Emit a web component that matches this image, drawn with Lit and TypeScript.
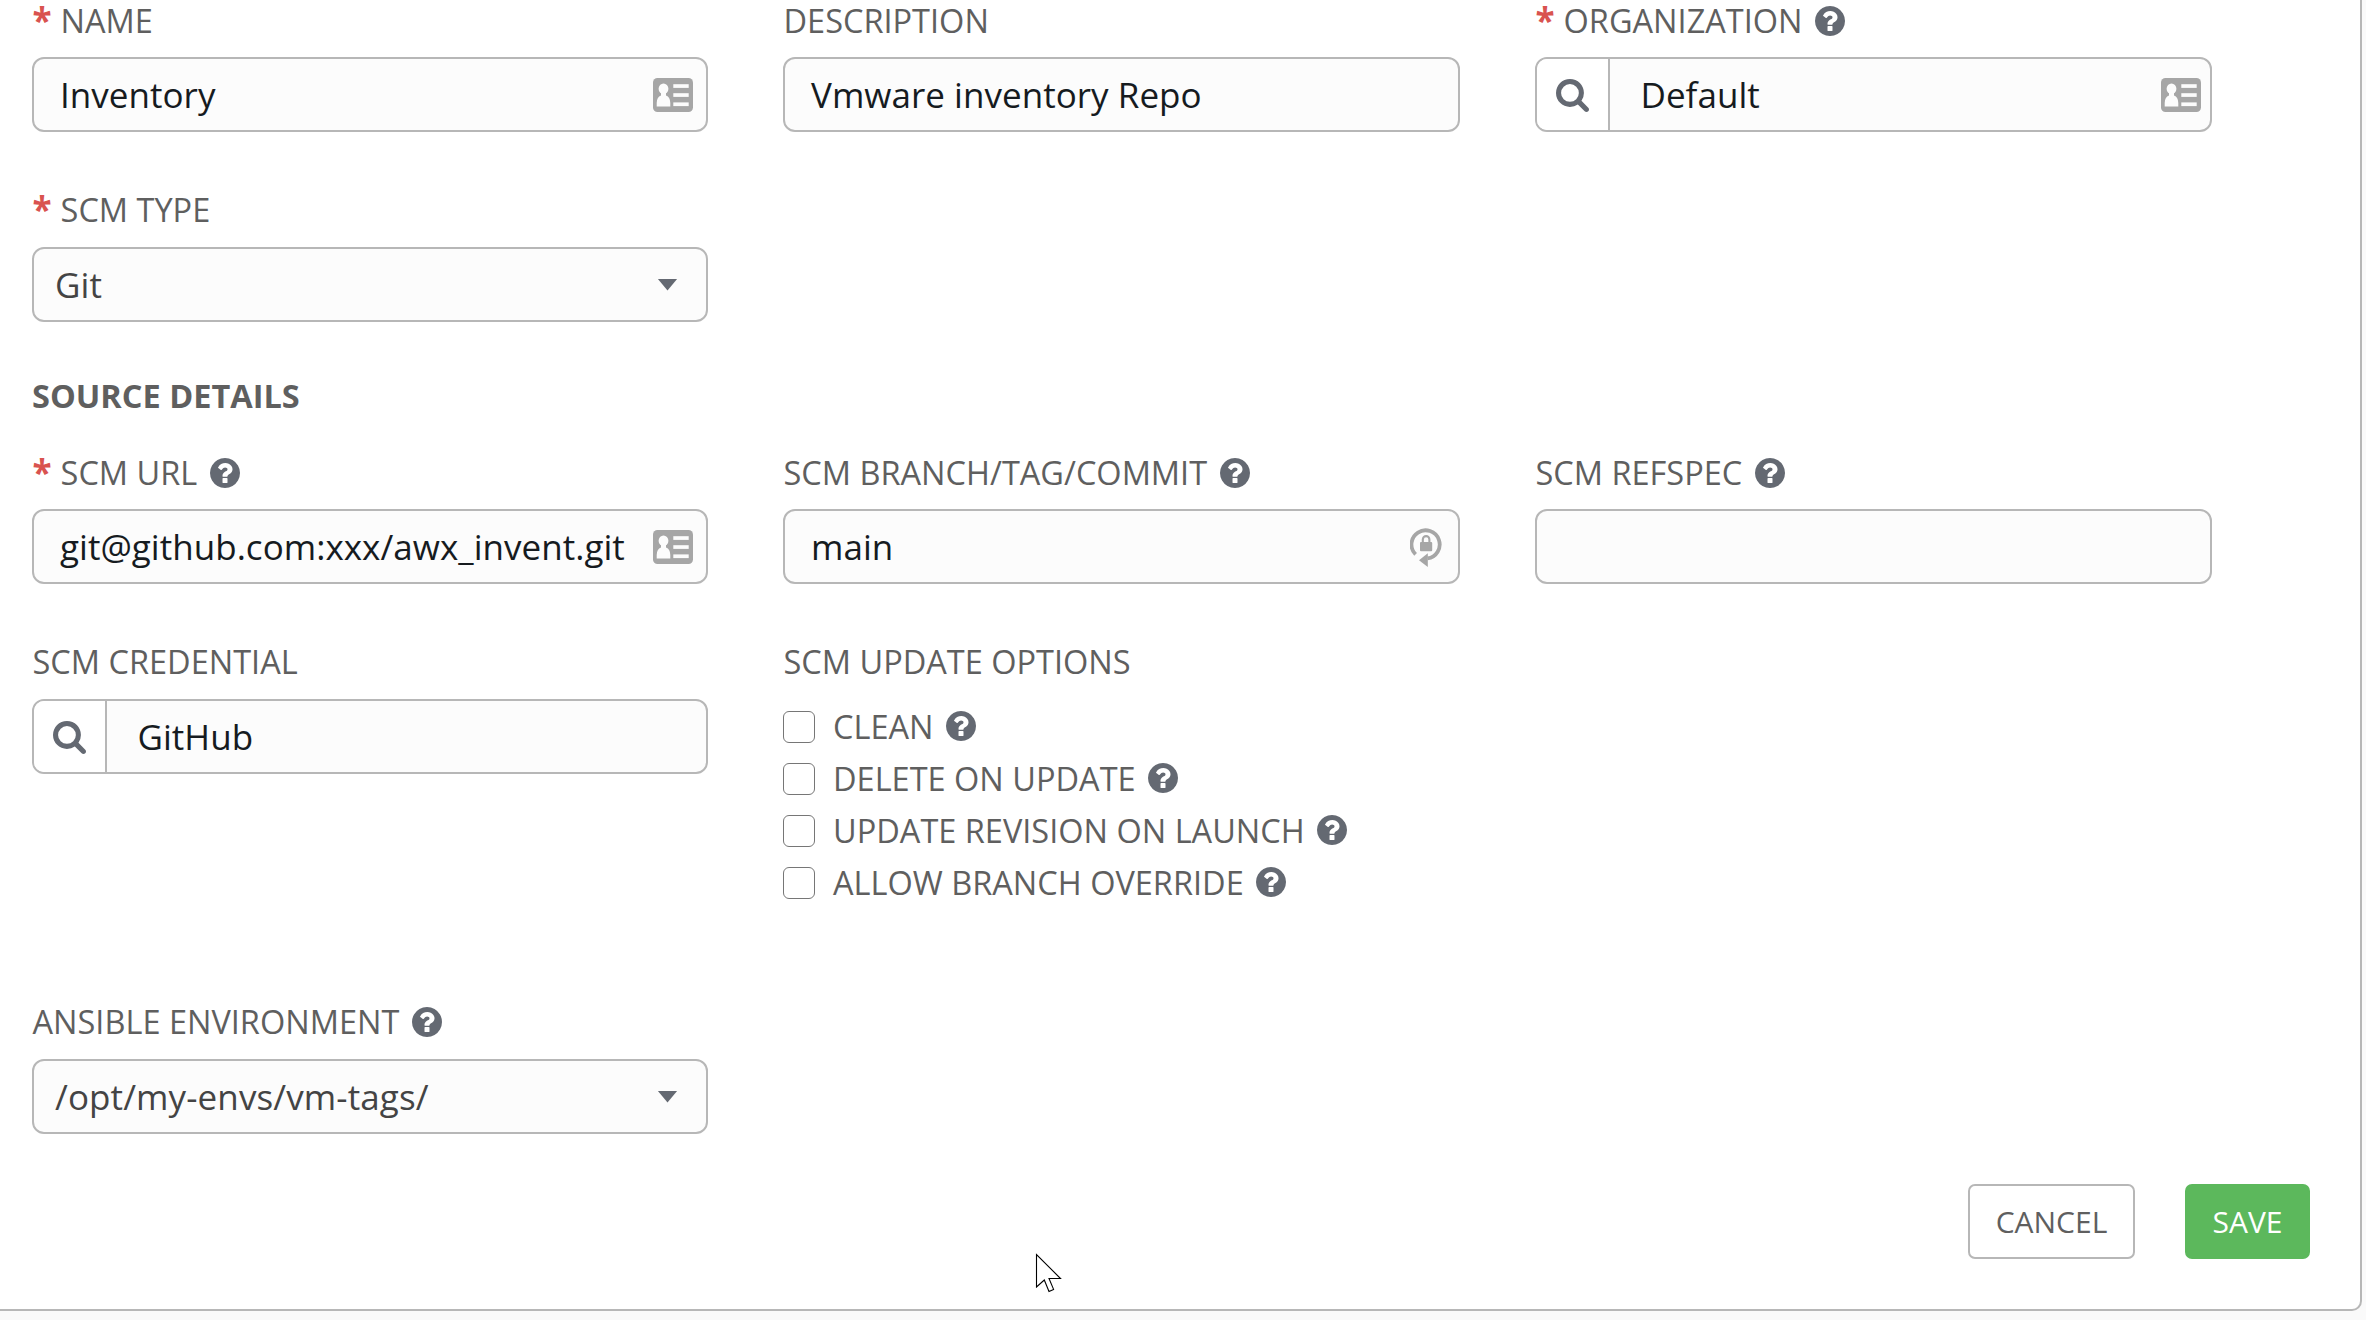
import { LitElement, html, css, svg, nothing } from "lit";
import { customElement, property } from "lit/decorators.js";

const FONT = css`"Open Sans", "Noto Sans", sans-serif`;

const helpIcon = html`<svg class="help" viewBox="128 128 1536 1536" aria-hidden="true">
  <path
    d="M1024 1376v-192q0-14-9-23t-23-9h-192q-14 0-23 9t-9 23v192q0 14 9 23t23 9h192q14 0 23-9t9-23zm256-672q0-88-55.5-163t-138.5-116-170-41q-243 0-371 213-15 24 8 42l132 100q7 6 19 6 16 0 25-12 53-68 86-92 34-24 86-24 48 0 85.5 26t37.5 59q0 38-20 61t-68 45q-63 28-115.5 86.5t-52.5 125.5v36q0 14 9 23t23 9h192q14 0 23-9t9-23q0-19 21.5-49.5t54.5-49.5q32-18 49-28.5t46-35 44.5-48 28-60.5 12.5-81zm384 192q0 209-103 385.5t-279.5 279.5-385.5 103-385.5-103-279.5-279.5-103-385.5 103-385.5 279.5-279.5 385.5-103 385.5 103 279.5 279.5 103 385.5z"
  ></path>
</svg>`;

const searchIcon = html`<svg class="search" viewBox="64 128 1664 1664" aria-hidden="true">
  <path
    d="M1216 832q0-185-131.5-316.5t-316.5-131.5-316.5 131.5-131.5 316.5 131.5 316.5 316.5 131.5 316.5-131.5 131.5-316.5zm512 832q0 52-38 90t-90 38q-54 0-90-38l-343-342q-179 124-399 124-143 0-273.5-55.5t-225-150-150-225-55.5-273.5 55.5-273.5 150-225 225-150 273.5-55.5 273.5 55.5 225 150 150 225 55.5 273.5q0 220-124 399l343 343q37 37 37 90z"
  ></path>
</svg>`;

const cardIcon = html`<svg class="card" viewBox="0 0 40 34" aria-hidden="true">
  <rect width="40" height="34" rx="4.5" fill="#a6a6a6"></rect>
  <g fill="#fcfcfc">
    <ellipse cx="10.5" cy="10.8" rx="4.9" ry="5.3"></ellipse>
    <path d="M8 14h5v3.4q4.3 1.6 4.3 7.6v3.4H3.7V25q0-6 4.3-7.6z"></path>
    ${[6.2, 15.2, 24.4].map((y) => svg`<rect x="20.3" y=${y} width="15.4" height="3.7"></rect>`)}
  </g>
</svg>`;

const lockIcon = html`<svg class="lock" viewBox="0 0 33 41" aria-hidden="true">
  <path d="M5.6 28.4A14.1 14.1 0 1 1 17.5 32.4" fill="none" stroke="#a6a6a6" stroke-width="3.8"></path>
  <path d="M9 34.2L17.8 27.2V41z" fill="#a6a6a6"></path>
  <rect x="10" y="16" width="12.2" height="9.2" rx="1" fill="#a6a6a6"></rect>
  <path d="M12.8 16.5V13.4a3.3 3.3 0 0 1 6.6 0V16.5" fill="none" stroke="#a6a6a6" stroke-width="2.1"></path>
</svg>`;

@customElement("form-field")
class FormField extends LitElement {
  @property() label = "";
  @property() value = "";
  @property() kind: "text" | "lookup" | "select" = "text";
  @property() badge = "";
  @property({ type: Boolean }) required = false;
  @property({ type: Boolean }) help = false;

  static styles = css`
    :host {
      display: block;
      min-width: 0;
      font-family: ${FONT};
    }
    .label {
      display: flex;
      align-items: center;
      height: 35px;
      margin-bottom: var(--label-gap, 20px);
      padding-left: 0.5px;
      font-size: 32.5px;
      line-height: 35px;
      color: #5f5f5f;
      white-space: nowrap;
    }
    .label-text {
      display: flex;
      align-items: baseline;
      gap: 9px;
    }
    .star {
      font-size: 35px;
      font-weight: 700;
      line-height: 30px;
      color: #d9534f;
    }
    .help {
      width: 30px;
      height: 30px;
      margin-left: 12.5px;
      fill: #646972;
    }
    .box {
      display: flex;
      align-items: center;
      box-sizing: border-box;
      height: 75px;
      overflow: hidden;
      border: 2px solid #b7b7b7;
      border-radius: 12px;
      background: #fcfcfc;
      font-size: 35px;
      line-height: 50px;
      white-space: nowrap;
      color: #161b1f;
    }
    .value {
      flex: 1;
      padding-left: 26px;
      letter-spacing: 0.03px;
    }
    .lookup .value {
      padding-left: 30.5px;
    }
    .select .value {
      padding-left: 21px;
      color: #444;
      letter-spacing: 0.1px;
    }
    .find {
      display: flex;
      align-items: center;
      justify-content: center;
      box-sizing: border-box;
      width: 73px;
      height: 100%;
      padding-top: 2px;
      border-right: 2px solid #b7b7b7;
      background: #fff;
    }
    .search {
      width: 33px;
      height: 33px;
      fill: #646972;
    }
    .card {
      width: 40px;
      height: 34px;
      margin-top: 1px;
      margin-right: 13px;
    }
    .lookup .card {
      margin-right: 9px;
    }
    .lock {
      width: 33px;
      height: 41px;
      margin-right: 15px;
    }
    .caret {
      width: 20px;
      height: 12px;
      margin-right: 28px;
      background: #646972;
      clip-path: polygon(0 0, 100% 0, 50% 100%);
    }
  `;

  render() {
    return html`
      <div class="label">
        <div class="label-text">
          ${this.required ? html`<span class="star">*</span>` : nothing}
          <span>${this.label}</span>
        </div>
        ${this.help ? helpIcon : nothing}
      </div>
      <div class="box ${this.kind}">
        ${this.kind === "lookup" ? html`<div class="find">${searchIcon}</div>` : nothing}
        <div class="value">${this.value}</div>
        ${this.badge === "card" ? cardIcon : nothing}
        ${this.badge === "lock" ? lockIcon : nothing}
        ${this.kind === "select" ? html`<div class="caret"></div>` : nothing}
      </div>
    `;
  }
}

@customElement("app-root")
class AppRoot extends LitElement {
  private options = ["CLEAN", "DELETE ON UPDATE", "UPDATE REVISION ON LAUNCH", "ALLOW BRANCH OVERRIDE"];

  static styles = css`
    :host {
      display: block;
      position: relative;
      width: 2366px;
      height: 1320px;
      overflow: hidden;
      background: #fafafa;
      font-family: ${FONT};
      color: #5f5f5f;
    }
    .panel {
      box-sizing: border-box;
      width: 2362px;
      height: 1311px;
      padding: 3px 50px 50px 32px;
      border: solid #b7b7b7;
      border-width: 0 2px 2px 0;
      border-radius: 0 0 10px 0;
      background: #fff;
    }
    .row {
      display: grid;
      grid-template-columns: 675.5px 676.5px 676.5px;
      column-gap: 75.5px;
    }
    .first {
      --label-gap: 19px;
      height: 189px;
    }
    .second {
      height: 171px;
    }
    .source {
      --label-gap: 19px;
      height: 189px;
    }
    .fourth {
      height: 360px;
    }
    .heading {
      height: 92px;
      padding-top: 14.5px;
      box-sizing: border-box;
      font-size: 32.5px;
      font-weight: 700;
      line-height: 35px;
    }
    .options-label,
    .option {
      padding-left: 0.5px;
      font-size: 32.5px;
      line-height: 35px;
      white-space: nowrap;
    }
    .options-label {
      margin-bottom: 21px;
    }
    .option {
      display: flex;
      align-items: center;
      height: 52px;
      padding-left: 0;
    }
    .check {
      box-sizing: border-box;
      width: 32px;
      height: 32px;
      margin-top: 1.5px;
      margin-right: 18px;
      border: 1px solid #767676;
      border-radius: 6px;
      background: #fff;
    }
    .help {
      width: 30px;
      height: 30px;
      margin-left: 12.5px;
      fill: #646972;
    }
    .actions {
      display: flex;
      justify-content: flex-end;
      gap: 50px;
      margin-top: 50px;
    }
    .button {
      display: flex;
      align-items: center;
      justify-content: center;
      box-sizing: border-box;
      width: 167px;
      height: 75px;
      border: 2px solid #b7b7b7;
      border-radius: 7px;
      background: #fff;
      font-size: 30px;
      line-height: 42px;
    }
    .save {
      width: 125px;
      border-color: #5cb85c;
      background: #5cb85c;
      color: #fff;
    }
    .pointer {
      position: absolute;
      left: 1035px;
      top: 1252px;
      width: 28px;
      height: 42px;
    }
  `;

  render() {
    return html`
      <div class="panel">
        <div class="row first">
          <form-field label="NAME" value="Inventory" badge="card" required></form-field>
          <form-field label="DESCRIPTION" value="Vmware inventory Repo"></form-field>
          <form-field label="ORGANIZATION" value="Default" kind="lookup" badge="card" required help></form-field>
        </div>
        <div class="row second">
          <form-field label="SCM TYPE" value="Git" kind="select" required></form-field>
        </div>
        <div class="heading">SOURCE DETAILS</div>
        <div class="row source">
          <form-field label="SCM URL" value="git@github.com:xxx/awx_invent.git" badge="card" required help></form-field>
          <form-field label="SCM BRANCH/TAG/COMMIT" value="main" badge="lock" help></form-field>
          <form-field label="SCM REFSPEC" help></form-field>
        </div>
        <div class="row fourth">
          <form-field label="SCM CREDENTIAL" value="GitHub" kind="lookup"></form-field>
          <div>
            <div class="options-label">SCM UPDATE OPTIONS</div>
            ${this.options.map(
              (name) => html`<div class="option">
                <span class="check"></span><span>${name}</span>${helpIcon}
              </div>`
            )}
          </div>
        </div>
        <div class="row">
          <form-field label="ANSIBLE ENVIRONMENT" value="/opt/my-envs/vm-tags/" kind="select" help></form-field>
        </div>
        <div class="actions">
          <div class="button">CANCEL</div>
          <div class="button save">SAVE</div>
        </div>
      </div>
      <svg class="pointer" viewBox="0 0 28 42" aria-hidden="true">
        <path
          d="M1.5 2.5V35L9.3 28L14 39.5L18.6 37.4L14 26.5H25.5z"
          fill="#fff"
          stroke="#000"
          stroke-width="1.1"
        ></path>
      </svg>
    `;
  }
}
